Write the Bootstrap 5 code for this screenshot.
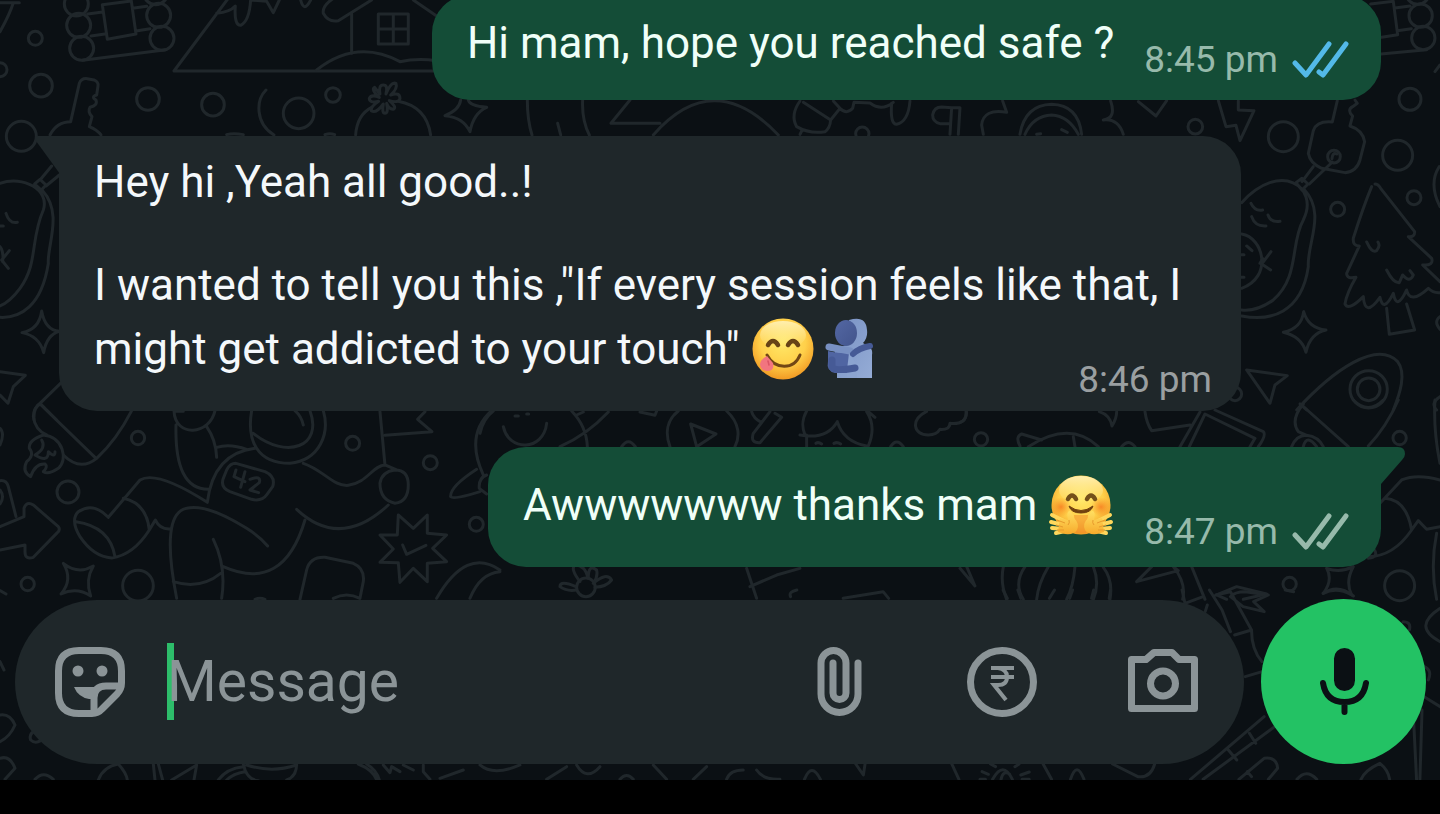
<!DOCTYPE html>
<html lang="en" data-bs-theme="dark">
<head>
<meta charset="utf-8">
<meta name="viewport" content="width=device-width, initial-scale=1">
<title>Chat</title>
<link href="https://cdn.jsdelivr.net/npm/bootstrap@5.3.0/dist/css/bootstrap.min.css" rel="stylesheet">
<style>
  body { background: #000; font-family: Roboto, "Noto Sans", sans-serif; }
  .chat { background: #0b1014; padding-bottom: 16px; }
  .wallpaper { inset: 0; width: 100%; height: 100%; fill: none; stroke: #20272b; stroke-width: 3; stroke-linecap: round; stroke-linejoin: round; }
  .wallpaper * { vector-effect: non-scaling-stroke; }
  .thread { padding: 0 59px; gap: 36px; }
  .bubble { border-radius: 38px; padding: 0 32px 12px 35px; font-size: 44px; line-height: 52px; max-width: 100%; }
  .bubble-out { background: #144d37; color: #f0fff8; gap: 30px; }
  .bubble-in { background: #1f272a; color: #f4f8fb; padding: 20px 29px 8px 35px; margin-right: 140px; border-top-left-radius: 0; }
  .bubble-first { margin-top: -5px; padding-bottom: 17px; }
  .bubble-first p { padding: 22px 0 14px; }
  .bubble-last { border-top-right-radius: 0; margin-bottom: 32px; }
  .bubble-last p { padding: 26px 0 18px; }
  .greeting { margin-bottom: 45px; }
  .tall { line-height: 64px; }
  .meta { font-size: 37px; line-height: 46px; gap: 14px; }
  .bubble-out .meta { color: #97baab; }
  .bubble-in .meta { color: #9a9fa1; margin-top: -24px; }
  .bubble-out .seen { color: #53b9e8; }
  .tail-in { left: -24px; top: 0; }
  .tail-out { right: -25px; top: 0; }
  .emoji { width: 66px; height: 64px; vertical-align: -17px; }
  .composer { padding: 0 14px 0 15px; gap: 17px; }
  .pill { background: #1f272a; border-radius: 82px; height: 164px; padding: 0 44px 0 38px; color: #8b9497; }
  .tool { width: 74px; height: 74px; color: inherit; }
  .tool svg { display: block; width: 74px; height: 74px; }
  .caret { width: 7px; height: 77px; background: #2dbd6a; margin-left: 40px; }
  .entry, .entry:focus { background: none; border: 0; box-shadow: none; font-size: 57px; line-height: 72px; padding: 0; margin-left: -7px; color: #e9edef; }
  .entry::placeholder { color: #8b9497; opacity: 1; }
  .tools { gap: 87px; }
  .mic { width: 165px; height: 165px; background: #23c264; color: #0b1014; }
</style>
</head>
<body>
<svg width="0" height="0" class="position-absolute" aria-hidden="true">
  <defs>
    <radialGradient id="face" cx=".5" cy=".38" r=".62">
      <stop offset="0" stop-color="#ffe969"/><stop offset=".6" stop-color="#ffd04a"/><stop offset="1" stop-color="#f19a24"/>
    </radialGradient>
    <linearGradient id="shine" x1="0" y1="0" x2="0" y2="1">
      <stop offset="0" stop-color="#fff6c8" stop-opacity=".8"/><stop offset="1" stop-color="#fff0a0" stop-opacity="0"/>
    </linearGradient>
    <radialGradient id="blush"><stop offset="0" stop-color="#f5711a" stop-opacity=".75"/><stop offset="1" stop-color="#f5861a" stop-opacity="0"/></radialGradient>
    <linearGradient id="back" x1="0" y1="0" x2="1" y2="1"><stop offset="0" stop-color="#7891c3"/><stop offset="1" stop-color="#95acd6"/></linearGradient>
    <linearGradient id="front" x1="0" y1="0" x2="1" y2="1"><stop offset="0" stop-color="#5367a3"/><stop offset="1" stop-color="#42548c"/></linearGradient>
    <linearGradient id="palm" x1="0" y1="0" x2="0" y2="1"><stop offset="0" stop-color="#ffdf62"/><stop offset="1" stop-color="#f7ab2c"/></linearGradient>
    <g id="checks" fill="none" stroke="currentColor" stroke-width="5" stroke-linecap="round" stroke-linejoin="round">
      <path d="M3 22L14 34L37 3M27 31L31 34L54 3"/>
    </g>
  </defs>
</svg>

<main class="chat position-relative overflow-hidden d-flex flex-column">
  <svg class="wallpaper position-absolute" viewBox="0 0 1440 780" preserveAspectRatio="xMidYMin slice" aria-hidden="true">
    <!-- top left: logs, house, bauble -->
    <g transform="scale(.3333)">
      <path d="M0 8H58M40 8Q28 45 0 95M0 188A20 20 0 0 1 0 230"/>
      <circle cx="106" cy="115" r="21"/><circle cx="123" cy="257" r="34"/><circle cx="64" cy="409" r="45"/>
      <circle cx="444" cy="297" r="34"/><circle cx="639" cy="314" r="34"/><circle cx="896" cy="340" r="46"/><circle cx="999" cy="285" r="22"/>
      <circle cx="229" cy="12" r="36"/><circle cx="236" cy="76" r="36"/><circle cx="245" cy="145" r="36"/>
      <circle cx="467" cy="-22" r="36"/><circle cx="476" cy="46" r="36"/><circle cx="486" cy="115" r="36"/>
      <path d="M263 42L308 36M273 108L320 101M248 181L498 149M398 25L440 19M408 93L450 86M307 14L394 3L408 102L322 118Z"/>
      <path d="M150 405Q170 365 212 365L238 250Q244 234 262 236L282 240Q296 246 294 258L290 285Q272 290 288 300Q294 316 270 322Q262 336 276 350L268 380Q292 390 303 405"/>
      <path d="M690 -12L522 213H1300M650 40Q690 36 706 18Q702 76 722 76Q748 64 752 0L800 4L820 38L838 0M902 0Q912 40 932 0M1115 0L1015 62Q985 68 970 40Q966 16 1005 -8M1055 42V160M1240 0L1310 48"/>
      <path d="M1135 42H1225V132H1135ZM1180 42V132M1135 87H1225M950 210Q1070 115 1200 185Q1250 174 1310 182"/>
      <path d="M798 270C768 300 765 370 822 405M1067 405C1070 360 1090 335 1115 322M1195 304Q1280 320 1292 405M680 404Q700 398 730 404M975 404Q990 398 1004 404"/>
      <path d="M1140 282Q1135 255 1150 255Q1165 255 1158 282Q1172 245 1188 250Q1194 265 1172 285Q1200 275 1200 296Q1196 310 1168 302Q1190 320 1182 327Q1168 330 1160 310Q1166 340 1155 340Q1145 340 1150 312Q1128 342 1114 332Q1112 320 1136 304Q1108 310 1108 295Q1114 282 1138 292Q1112 268 1124 262Z"/>
    </g>
    <!-- strip between the first two bubbles -->
    <g transform="translate(440 0) scale(.3333)">
      <path d="M62 300Q58 330 15 347Q70 352 90 395Q100 340 140 322Q90 318 85 300M262 300Q262 360 276 405M428 300Q425 360 448 405M353 370L362 405M570 300L513 370H660M640 405Q820 200 1015 405"/>
    </g>
    <g transform="translate(700 95) scale(.3333)">
      <path d="M300 18Q270 60 290 95Q330 118 375 110Q390 100 392 75L420 40M310 22L392 75M300 118L305 108M400 18L420 40Q440 60 458 40L462 22L510 24Q545 50 580 22M575 25Q570 88 590 88Q625 80 630 18"/>
      <circle cx="487" cy="116" r="20"/>
      <path d="M750 118L755 38H780L775 118M752 86H720Q698 80 698 60Q702 36 725 36L755 38M908 18L920 52Q850 40 845 90L850 118M960 118Q975 30 1055 28Q1135 30 1145 118M975 118Q1000 62 1055 60Q1105 62 1135 118M1085 104L1102 112M1010 118L1022 116M1232 18Q1250 70 1210 75Q1255 70 1270 118"/>
    </g>
    <!-- right side: keys, sleeping avocado, tree, rocket -->
    <g transform="translate(1100 0) scale(.3333)">
      <path d="M115 305L168 348L200 302M355 302L378 380L408 376L420 422L462 332L415 330V302"/>
      <circle cx="286" cy="380" r="22"/><circle cx="550" cy="410" r="45"/><circle cx="930" cy="298" r="33"/><circle cx="893" cy="466" r="45"/><circle cx="942" cy="593" r="21"/><circle cx="713" cy="628" r="21"/>
      <circle cx="962" cy="47" r="35"/><circle cx="970" cy="114" r="35"/><circle cx="953" cy="-22" r="35"/>
      <path d="M812 12L880 4L893 104L845 112M885 24L930 18M892 92L934 86M843 162L980 149M1005 215L1020 195"/>
      <path d="M712 302L697 366Q650 362 640 392L625 460Q630 490 665 505L735 518Q770 515 780 480L794 425Q788 390 750 378L758 348Q740 330 758 320L772 310L765 300"/>
      <circle cx="702" cy="470" r="19"/>
      <path d="M710 462Q698 456 696 476M697 486L628 552M640 500L606 545M588 548L606 535L624 552L606 570Z"/>
      <path d="M425 608C540 480 660 560 610 660C570 730 600 830 520 900Q470 935 425 930M612 568C680 640 620 730 625 800C605 940 510 965 425 948M425 702C490 712 520 830 425 865"/>
      <path d="M453 610Q465 635 488 630M504 645Q512 668 540 664M455 650Q465 680 498 678M440 738L456 752M513 755L485 792L512 810M488 776L480 790M424 764L432 764M424 832L432 832"/>
      <path d="M825 552Q835 552 842 565L944 695Q945 712 925 710L995 775Q1002 798 968 795L1020 845M815 560Q790 620 760 715Q758 738 778 738L740 820Q740 838 768 832Q740 880 735 912Q745 935 790 890Q795 955 840 892Q850 940 880 880Q890 935 920 870Q930 915 985 865Q1000 880 1020 878M860 925L868 1003L944 990L920 912"/>
      <path d="M800 726Q815 760 830 752Q842 738 834 726M860 810Q880 850 898 848L908 825Q930 850 940 825L930 812M1018 500Q985 550 1020 620M1020 950Q1000 965 1020 988M1020 1190Q990 1210 1010 1230"/>
      <path d="M611 935Q605 985 550 997Q605 1010 618 1057Q630 1000 678 990Q625 985 611 935ZM440 1110L562 1127L525 1155L510 1210Z"/>
      <path d="M590 1230C700 1110 830 1020 893 1085C920 1120 900 1180 880 1230M600 1212L620 1230"/>
      <circle cx="806" cy="1168" r="56"/><circle cx="806" cy="1168" r="34"/><circle cx="405" cy="1182" r="20"/>
    </g>
    <!-- left edge beside the incoming bubble -->
    <g transform="translate(0 130) scale(.3333)">
      <path d="M0 33C90 8 160 68 128 182C115 250 110 400 45 490Q20 520 0 528" visibility="hidden"/>
      <path d="M0 160C70 135 150 180 130 240C90 330 115 400 60 475Q30 515 0 528M128 182C190 250 140 350 145 400C125 530 60 565 0 562M155 108L120 150M178 135L138 168M104 162L120 148L138 165L124 180ZM18 250Q28 282 52 277M0 288H10M28 362L5 390L25 415M0 350Q12 365 8 395"/>
      <path d="M125 543Q118 598 66 608Q118 618 131 668Q140 615 178 604Q135 600 125 543ZM0 725L76 736L40 770L24 820L0 795M190 752L120 820Q100 830 102 870M120 820L170 870"/>
    </g>
    <!-- astronaut band -->
    <g transform="translate(0 400) scale(.3333)">
      <path d="M100 50Q105 90 140 105M120 12L285 172M100 50Q100 25 120 12M395 32Q350 120 290 175Q240 215 190 165M0 85Q15 100 0 135"/>
      <path d="M130 105C190 110 205 180 175 205Q145 225 130 215Q145 200 135 192Q105 190 92 230Q65 215 80 185Q105 165 88 145Q85 120 130 105ZM125 120Q140 145 105 165Q145 190 145 155Q165 175 165 155"/>
      <circle cx="414" cy="114" r="20"/><circle cx="204" cy="276" r="33"/><circle cx="83" cy="552" r="20"/><circle cx="414" cy="557" r="46"/><circle cx="1058" cy="130" r="21"/><circle cx="1291" cy="188" r="21"/><circle cx="1429" cy="373" r="21"/>
      <path d="M0 242Q20 240 25 260L48 350M0 270Q15 290 0 312M0 380L72 350V325Q80 302 100 315L175 380Q182 390 172 398L100 472Q75 480 75 455V435L0 450"/>
      <path d="M190 490Q235 525 280 498Q255 540 272 588Q230 560 183 582Q220 540 190 490Z"/>
      <path d="M325 352L420 240Q470 210 622 307Q640 160 765 145M325 352Q280 305 235 335Q210 360 240 410Q280 470 335 474Q400 465 448 390Q440 310 370 295M228 365Q330 380 345 470M448 390L466 360Q480 390 512 387"/>
      <path d="M530 595Q480 340 560 325Q620 310 740 385Q780 410 803 438M640 418Q680 500 665 595M520 545Q600 570 662 520M670 500Q850 580 915 360"/>
      <path d="M522 32C525 115 630 105 645 32M528 75C525 200 555 270 628 268M620 80Q648 120 650 172M650 142Q690 130 740 148M755 32C740 120 770 190 870 190C960 180 990 100 970 32M760 100C860 180 970 140 930 32M885 32Q905 50 910 75M525 34H550"/>
      <path d="M708 190L795 215Q828 230 818 260L800 285Q785 305 755 298L690 275Q660 262 670 235L680 210Q690 190 708 190ZM708 210L702 230L735 245M735 215L722 262M750 238Q785 225 778 248L750 270L776 278"/>
      <path d="M910 190C970 210 1000 260 1045 256C1100 250 1120 195 1155 195L1190 210M890 328Q1020 450 1165 315M1140 34L1155 195M1155 106L1296 95L1253 58L1275 35M1185 210Q1225 210 1225 255Q1225 305 1185 310Q1140 300 1140 250Q1145 215 1185 210Z"/>
      <path d="M1195 345L1240 385L1282 345V400L1340 405L1298 445L1340 485L1282 490V545L1240 505L1200 547L1195 488L1140 487L1180 447L1140 405L1192 405ZM1208 435L1220 463L1278 436"/>
      <path d="M900 598L920 510Q930 470 975 472L1060 490Q1095 505 1090 545L1080 595M1000 595Q1040 575 1080 595M1310 595Q1400 440 1500 510M1410 595Q1440 520 1500 515M1475 32C1410 90 1420 160 1450 225M1430 208Q1350 260 1352 290Q1360 300 1440 275M1460 225Q1435 235 1438 265L1460 282M0 572L18 582M765 598Q780 592 795 598"/>
    </g>
    <g transform="translate(480 400) scale(.3333)">
      <path d="M0 100Q10 55 40 33M70 80C85 155 190 155 200 70M275 33Q320 80 322 140M385 36Q320 105 240 140M290 45L310 36M480 36L525 46L530 33M105 48H115M140 42H146"/>
      <path d="M595 33C560 60 555 100 570 140M740 33C780 70 780 110 765 140M632 72L708 102L650 140ZM815 35Q820 55 845 68M870 35L820 100Q810 130 840 128L905 52L885 40M980 33C965 60 965 80 975 105M960 105Q1040 120 1072 65Q1090 125 1160 138M980 105V140M1160 35Q1190 80 1165 138M1165 35L1185 52M1008 130Q1015 125 1025 132M1062 130Q1072 125 1082 132"/>
      <path d="M1340 34C1290 60 1300 105 1345 105Q1370 105 1380 88Q1410 90 1410 70Q1460 75 1460 35M425 140Q445 110 466 140M1232 140Q1250 112 1270 140"/>
    </g>
    <g transform="translate(960 400) scale(.3333)">
      <circle cx="63" cy="118" r="20"/><circle cx="1319" cy="114" r="20"/><circle cx="989" cy="552" r="20"/><circle cx="1319" cy="557" r="45"/>
      <path d="M418 35Q450 45 456 78Q470 55 470 35M18 35Q20 60 0 68M555 35Q560 70 575 92L690 75M660 140L720 36M688 140L735 42L885 115L870 140M765 30L910 95Q920 105 895 140M180 138Q165 110 185 102L245 120M205 140Q330 60 415 140M340 110L345 140M485 140Q505 115 525 140"/>
      <path d="M1030 12Q990 60 1015 95L1040 106M1025 15L1165 140M1315 0Q1280 80 1225 138M995 140Q1010 105 1040 106Q1075 110 1090 140M1030 140Q1040 100 1070 140M1180 0Q1225 45 1270 0M1425 0Q1420 90 1440 190M1260 310L1325 240Q1370 220 1440 240M1275 295Q1340 300 1355 390L1375 362L1400 388L1440 380M1355 390Q1300 470 1225 470M1240 445Q1260 470 1225 475M1430 400Q1410 500 1430 598"/>
      <path d="M0 505L45 558L20 500M130 500Q120 550 140 598M195 500Q160 550 190 598M265 500Q235 550 230 598M345 500Q340 560 320 598M400 500Q420 550 400 598M430 502Q460 540 450 598M530 545L575 500M530 545L655 512L640 500Q680 550 668 598M695 500L735 598M770 585L830 560L920 582L850 598M770 585L800 598M1100 505Q1140 520 1180 500Q1155 545 1175 585Q1130 560 1090 580Q1120 540 1100 505Z"/>
    </g>
    <!-- behind and below the composer -->
    <g transform="translate(0 590) scale(.3333)">
      <path d="M0 215L12 240M0 375Q30 370 45 405Q30 440 0 455M0 505Q30 495 45 535L15 568M105 568Q130 540 160 568M110 420Q85 430 92 450Q105 462 122 452"/>
      <path d="M295 570Q310 530 355 522Q380 550 382 570M460 522L465 570M475 522L488 570M515 570L590 525L582 570M655 570Q680 535 730 530M680 570Q700 550 735 545M730 522Q740 570 775 572M890 522Q890 560 860 570M740 525Q815 550 890 525M1075 522Q1120 540 1130 570M1100 522Q1130 540 1138 570M1150 525L1170 548L1175 530L1200 545M1210 525L1240 540M1270 525V545L1290 568"/>
      <path d="M1320 565L1390 540M1440 525Q1480 560 1560 525M1640 568L1700 530M1730 525Q1760 575 1800 530M1860 568Q1880 545 1900 568M1960 525L2000 568M2080 568L2120 530M2180 568Q2190 540 2230 540M2270 540Q2290 570 2340 568"/>
      <path d="M1740 -25Q1710 -65 1725 -75Q1755 -75 1765 -35Q1765 -80 1790 -60Q1795 -40 1780 -20Q1820 -55 1835 -30Q1820 -10 1785 -8M1728 -10Q1680 -30 1680 -10Q1700 5 1730 0M2240 -65L2270 25M2250 -10L2330 -45L2400 -65"/>
      <circle cx="1758" cy="-8" r="28"/>
    </g>
    <g transform="translate(780 590) scale(.421 .3333)">
      <path d="M25 20Q20 5 40 0M150 25L245 5L258 25M530 0L540 25M565 0L572 25M652 0L640 25M695 0L688 25M745 0L740 25M785 0L782 25M955 0L962 40L1005 20M1020 0L1050 60L1070 125M1015 45L1010 65M1035 15L1070 5L1120 120L1080 135M1120 120Q1120 180 1145 215M1070 20Q1080 5 1105 5L1160 15L1125 35L1150 65L1100 50ZM1200 0L1220 5M1290 10Q1325 -20 1362 18M1568 55Q1500 110 1568 155M1480 95Q1500 95 1495 120M1530 230Q1550 240 1540 270M1105 260L1145 245M1530 320L1568 350"/>
      <path d="M1150 380L975 568M1175 410L1005 568M1115 430L1130 460M1065 480L1085 510M1090 568L1150 505Q1180 500 1182 535L1160 568M1110 545L1120 560M1228 568Q1250 535 1275 568M1380 568Q1390 540 1425 520Q1445 540 1448 568M1505 390L1512 568M1525 360L1520 568"/>
      <path d="M58 568Q75 515 96 568M180 522L198 555L202 522M408 522L425 568M625 522L645 568M690 568Q705 510 722 568M790 522L850 560Q880 565 890 522M505 568Q530 510 552 568M525 568Q530 540 545 552M480 545L495 553M500 522L512 530M568 522L558 530M592 546L572 555M475 568H488M575 568H592"/>
    </g>
  </svg>

  <section class="thread position-relative d-flex flex-column align-items-end" aria-label="Messages">
    <article class="bubble bubble-out bubble-first d-flex align-items-end">
      <p class="m-0">Hi mam, hope you reached safe ?</p>
      <div class="meta d-flex align-items-center text-nowrap">
        <time>8:45 pm</time>
        <svg class="seen" width="57" height="38" role="img" aria-label="Read"><use href="#checks"/></svg>
      </div>
    </article>

    <article class="bubble bubble-in position-relative align-self-stretch d-flex flex-column">
      <svg class="tail-in position-absolute" width="25" height="38" aria-hidden="true"><path d="M25 0H3Q-1 0 1 5L25 38Z" fill="#1f272a"/></svg>
      <p class="greeting">Hey hi ,Yeah all good..!</p>
      <p class="tall m-0">I wanted to tell you this ,"If every session feels like that, I might get addicted to your touch"
        <span class="text-nowrap"><svg class="emoji" viewBox="0 0 66 64" role="img" aria-label="face savouring food">
          <circle cx="32" cy="32" r="30.500" fill="url(#face)"/>
          <ellipse cx="32" cy="18" rx="23" ry="14" fill="url(#shine)"/>
          <path d="M17 28Q22 20 27 28M37 28Q42 20 47 28" fill="none" stroke="#674316" stroke-width="4.500" stroke-linecap="round"/>
          <path d="M16 38C24 53 43 53 49 38" fill="none" stroke="#724715" stroke-width="3" stroke-linecap="round"/>
          <path d="M16 39L22 46Q24 54 16 54Q9 53 9 47Q10 42 16 39Z" fill="#f2757f"/>
          <path d="M17 44L18 48" fill="none" stroke="#dc5565" stroke-width="1.500" stroke-linecap="round"/>
        </svg><svg class="emoji" viewBox="0 0 66 64" role="img" aria-label="people hugging">
          <path d="M32 3Q49 -2 50 13Q51 21 46 26L52 30Q56 32 55 38V61H20V46L17 31Q28 30 32 26Z" fill="url(#back)"/>
          <ellipse cx="29" cy="16" rx="11" ry="13" fill="url(#front)"/>
          <path d="M11 34Q21 37 32 35L37 56H18Q9 54 11 44Z" fill="#5065a2"/>
          <path d="M12 30Q22 32 33 34" fill="none" stroke="#7890c2" stroke-width="7" stroke-linecap="round"/>
          <path d="M32 36L40 48V61H30V53Z" fill="#8ca4d0"/>
          <path d="M15 43V50Q17 55 38 51" fill="none" stroke="#465a96" stroke-width="7" stroke-linecap="round" stroke-linejoin="round"/>
          <path d="M36 37Q42 31 53 29" fill="none" stroke="#465a96" stroke-width="6" stroke-linecap="round"/>
        </svg></span></p>
      <div class="meta align-self-end"><time>8:46 pm</time></div>
    </article>

    <article class="bubble bubble-out bubble-last position-relative d-flex align-items-end">
      <svg class="tail-out position-absolute" width="26" height="40" aria-hidden="true"><path d="M0 0H18Q25 0 25 7Q25 10 22 13L1 37V40H0Z" fill="#144d37"/></svg>
      <p class="tall m-0">Awwwwwww thanks mam
        <svg class="emoji" viewBox="0 0 66 64" role="img" aria-label="hugging face">
          <circle cx="33" cy="32" r="29.500" fill="url(#face)"/>
          <ellipse cx="33" cy="17" rx="22" ry="14" fill="url(#shine)"/>
          <circle cx="13" cy="34" r="10" fill="url(#blush)"/><circle cx="53" cy="34" r="10" fill="url(#blush)"/>
          <path d="M20 26Q24 19 28 26M39 26Q43 19 47 26" fill="none" stroke="#74501a" stroke-width="4.500" stroke-linecap="round"/>
          <path d="M21 33Q33 42 45 33Q43 40 33 40Q23 40 21 33Z" fill="#70410f" stroke="#70410f" stroke-linejoin="round"/>
          <path d="M26 42H40L38 60H28Z" fill="#f08b2c" opacity=".5"/>
          <g id="hand">
            <path d="M4 42L16 48M3 49L15 52M4 55L15 56M8 60L17 58" fill="none" stroke="#ffd75c" stroke-width="4" stroke-linecap="round"/>
            <path d="M12 45L20 47Q18 38 22 38Q25 40 26 45Q32 51 29 57Q26 62 17 61L10 59Z" fill="url(#palm)"/>
            <path d="M9 47L17 50M8 52L15 54M9 57L16 57M21 47Q22 50 20 52" fill="none" stroke="#e79a2c" stroke-width="1"/>
          </g>
          <use href="#hand" transform="translate(66 0) scale(-1 1)"/>
        </svg></p>
      <div class="meta d-flex align-items-center text-nowrap">
        <time>8:47 pm</time>
        <svg width="57" height="38" role="img" aria-label="Delivered"><use href="#checks"/></svg>
      </div>
    </article>
  </section>

  <form class="composer position-relative d-flex align-items-center" onsubmit="return false">
    <div class="pill d-flex align-items-center flex-grow-1">
      <button type="button" class="tool btn border-0 p-0 flex-shrink-0" aria-label="Stickers">
        <svg viewBox="0 0 74 74" fill="none" stroke="currentColor" stroke-width="7" stroke-linejoin="round">
          <path d="M26 5.500H48Q68.500 5.500 68.500 26V38Q68.500 44 64 49L49 64Q45 68.500 39 68.500H26Q5.500 68.500 5.500 48V26Q5.500 5.500 26 5.500Z"/>
          <path d="M41 68V53Q41 41 53 41H68"/>
          <circle cx="25" cy="26" r="5.500" fill="currentColor" stroke="none"/><circle cx="49" cy="26" r="5.500" fill="currentColor" stroke="none"/>
          <path d="M21 42H46L40 54H36Q25 52 21 42Z" fill="currentColor" stroke="none"/>
        </svg>
      </button>
      <span class="caret flex-shrink-0" aria-hidden="true"></span>
      <input type="text" class="entry form-control flex-grow-1" placeholder="Message" aria-label="Message">
      <div class="tools d-flex flex-shrink-0">
        <button type="button" class="tool btn border-0 p-0" aria-label="Attach">
          <svg viewBox="0 0 74 74" fill="none" stroke="currentColor" stroke-width="7" stroke-linecap="round">
            <path d="M54 18V49A18.500 18.500 0 0 1 17 49V18A12.500 12.500 0 0 1 42 18V48A6.500 6.500 0 0 1 29 48V18"/>
          </svg>
        </button>
        <button type="button" class="tool btn border-0 p-0" aria-label="Send payment">
          <svg viewBox="0 0 74 74" fill="none" stroke="currentColor" stroke-width="7">
            <circle cx="37" cy="37" r="31.500"/>
            <path d="M26 23H49M26 32H49M28 23H33Q42 24 42 32Q42 40 33 40H29L41 55" stroke-width="4"/>
          </svg>
        </button>
        <button type="button" class="tool btn border-0 p-0" aria-label="Camera">
          <svg viewBox="0 0 74 74" fill="none" stroke="currentColor" stroke-width="7" stroke-linejoin="round">
            <path d="M5.500 14.500H20L28 7.500H46L53 14.500H68.500V63.500H5.500Z"/>
            <circle cx="37" cy="38.500" r="12.500"/>
          </svg>
        </button>
      </div>
    </div>
    <button type="button" class="mic btn border-0 rounded-circle p-0 flex-shrink-0 d-flex align-items-center justify-content-center" aria-label="Record voice message">
      <svg width="50" height="70" viewBox="0 0 50 70" fill="none" stroke="currentColor" stroke-width="6" stroke-linecap="round">
        <rect x="15" y="1" width="21" height="43" rx="10.500" fill="currentColor" stroke="none"/>
        <path d="M4 36Q7 55 25.500 55Q44 55 47 36M25.500 56V65"/>
      </svg>
    </button>
  </form>
</main>
<script src="https://cdn.jsdelivr.net/npm/bootstrap@5.3.0/dist/js/bootstrap.bundle.min.js"></script>
</body>
</html>
